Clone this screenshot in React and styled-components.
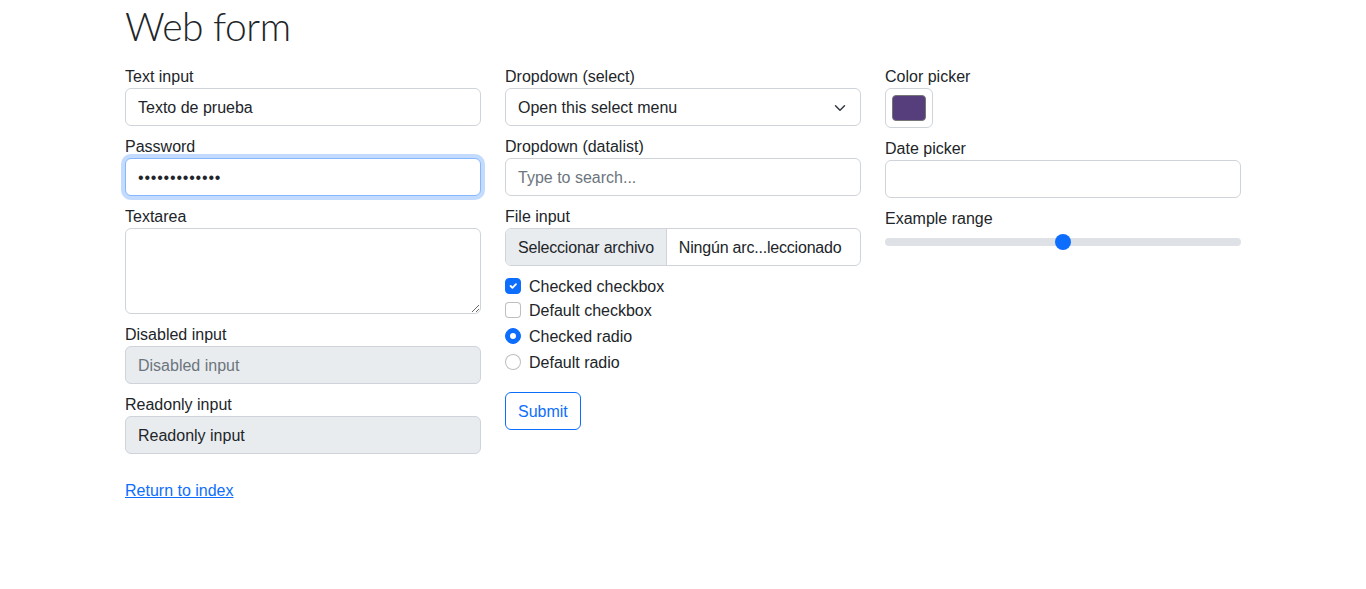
import React from "react";
import styled, { createGlobalStyle, css } from "styled-components";

const GlobalStyle = createGlobalStyle`
  * { box-sizing: border-box; }
  body {
    margin: 0;
    font-family: "Liberation Sans", Arial, sans-serif;
    font-size: 16px;
    line-height: 1.5;
    color: #212529;
    background: #fff;
  }
`;

const fieldBase = css`
  display: block;
  width: 100%;
  height: 38px;
  padding: 7px 12px 5px;
  font-family: inherit;
  font-size: 16px;
  line-height: 1.5;
  color: #212529;
  background-color: #fff;
  border: 1px solid #ced4da;
  border-radius: 6px;
  outline: none;
`;

function App() {
  return (
    <>
      <GlobalStyle />
      <Container>
        <Title>Web form</Title>
        <Row>
          <Column>
            <Field>
              <Caption>Text input</Caption>
              <Input type="text" defaultValue="Texto de prueba" />
            </Field>
            <Field>
              <Caption>Password</Caption>
              <Input type="password" defaultValue="1234567890123" focused secret />
            </Field>
            <Field>
              <Caption>Textarea</Caption>
              <TextArea rows={3} />
            </Field>
            <Field>
              <Caption>Disabled input</Caption>
              <Input type="text" placeholder="Disabled input" disabled />
            </Field>
            <Field>
              <Caption>Readonly input</Caption>
              <Input type="text" defaultValue="Readonly input" readOnly muted />
            </Field>
          </Column>

          <Column>
            <Field>
              <Caption>Dropdown (select)</Caption>
              <Select>
                <span>Open this select menu</span>
                <svg width="16" height="12" viewBox="0 0 16 16">
                  <path
                    d="m2 5 6 6 6-6"
                    fill="none"
                    stroke="#343a40"
                    strokeWidth="2"
                    strokeLinecap="round"
                    strokeLinejoin="round"
                  />
                </svg>
              </Select>
            </Field>
            <Field>
              <Caption>Dropdown (datalist)</Caption>
              <Input type="text" placeholder="Type to search..." />
            </Field>
            <Field>
              <Caption>File input</Caption>
              <FileBox>
                <FileButton>Seleccionar archivo</FileButton>
                <FileName>Ningún arc...leccionado</FileName>
              </FileBox>
            </Field>
            <Check>
              <CheckBox checked>
                <svg width="12" height="12" viewBox="0 0 20 20">
                  <path
                    d="m6 10 3 3 6-6"
                    fill="none"
                    stroke="#fff"
                    strokeWidth="3"
                    strokeLinecap="round"
                    strokeLinejoin="round"
                  />
                </svg>
              </CheckBox>
              <Caption>Checked checkbox</Caption>
            </Check>
            <Check>
              <CheckBox />
              <Caption>Default checkbox</Caption>
            </Check>
            <Check spaced>
              <Radio checked />
              <Caption>Checked radio</Caption>
            </Check>
            <Check spaced>
              <Radio />
              <Caption>Default radio</Caption>
            </Check>
            <SubmitButton type="button">Submit</SubmitButton>
          </Column>

          <Column>
            <Field>
              <Caption>Color picker</Caption>
              <ColorBox>
                <Swatch color="#563d7c" />
              </ColorBox>
            </Field>
            <Field>
              <Caption>Date picker</Caption>
              <Input type="text" />
            </Field>
            <Field>
              <Caption>Example range</Caption>
              <Range type="range" min="0" max="10" defaultValue="5" />
            </Field>
          </Column>
        </Row>
        <BackLink href="#">Return to index</BackLink>
      </Container>
    </>
  );
}

export default App;

const Container = styled.div`
  width: 1140px;
  margin: 0 auto;
  padding: 0 12px;
`;

const Title = styled.h1`
  height: 48px;
  margin: 0 0 16px;
  padding-top: 3px;
  font-family: "Lato", "Liberation Sans", sans-serif;
  font-size: 39px;
  font-weight: 300;
  letter-spacing: -0.5px;
  line-height: 1.2;
`;

const Row = styled.div`
  display: grid;
  grid-template-columns: repeat(3, 356px);
  column-gap: 24px;
  align-items: start;
`;

const Column = styled.div`
  display: flex;
  flex-direction: column;
  align-items: flex-start;
`;

const Field = styled.label`
  display: block;
  width: 100%;
  margin-bottom: 8px;
`;

const Caption = styled.span`
  display: block;
  height: 24px;
  padding-top: 1px;
`;

const Input = styled.input`
  ${fieldBase}
  &::placeholder {
    color: #6c757d;
    opacity: 1;
  }
  &:disabled {
    background-color: #e9ecef;
  }
  ${(p) =>
    p.muted &&
    css`
      background-color: #e9ecef;
    `}
  ${(p) =>
    p.secret &&
    css`
      letter-spacing: 0.8px;
    `}
  ${(p) =>
    p.focused &&
    css`
      border-color: #86b7fe;
      box-shadow: 0 0 0 4px rgba(13, 110, 253, 0.25);
    `}
`;

const TextArea = styled.textarea`
  ${fieldBase}
  height: 86px;
  resize: vertical;
`;

const Select = styled.div`
  ${fieldBase}
  display: flex;
  align-items: center;
  justify-content: space-between;
  padding-right: 12px;
`;

const FileBox = styled.div`
  ${fieldBase}
  display: flex;
  align-items: stretch;
  padding: 0;
  overflow: hidden;
`;

const FileButton = styled.span`
  display: flex;
  align-items: center;
  padding: 1px 12px 0;
  background-color: #e9ecef;
  border-right: 1px solid #ced4da;
  white-space: nowrap;
  letter-spacing: -0.2px;
`;

const FileName = styled.span`
  display: flex;
  align-items: center;
  padding: 1px 12px 0;
  white-space: nowrap;
  letter-spacing: -0.2px;
`;

const Check = styled.div`
  display: flex;
  align-items: center;
  gap: 8px;
  height: 24px;
  margin-top: ${(p) => (p.spaced ? "2px" : "0")};
`;

const CheckBox = styled.span`
  display: inline-flex;
  align-items: center;
  justify-content: center;
  flex-shrink: 0;
  width: 16px;
  height: 16px;
  border-radius: 4px;
  border: 1px solid ${(p) => (p.checked ? "#0d6efd" : "rgba(0, 0, 0, 0.25)")};
  background-color: ${(p) => (p.checked ? "#0d6efd" : "#fff")};
`;

const Radio = styled.span`
  display: inline-flex;
  align-items: center;
  justify-content: center;
  flex-shrink: 0;
  width: 16px;
  height: 16px;
  border-radius: 50%;
  border: 1px solid ${(p) => (p.checked ? "#0d6efd" : "rgba(0, 0, 0, 0.25)")};
  background-color: ${(p) => (p.checked ? "#0d6efd" : "#fff")};
  &::after {
    content: "";
    display: ${(p) => (p.checked ? "block" : "none")};
    width: 6px;
    height: 6px;
    border-radius: 50%;
    background: #fff;
  }
`;

const SubmitButton = styled.button`
  margin-top: 18px;
  height: 38px;
  padding: 7px 12px 5px;
  font-family: inherit;
  font-size: 16px;
  line-height: 1.5;
  color: #0d6efd;
  background: transparent;
  border: 1px solid #0d6efd;
  border-radius: 6px;
  cursor: pointer;
`;

const ColorBox = styled.div`
  width: 48px;
  height: 40px;
  padding: 6px;
  border: 1px solid #ced4da;
  border-radius: 6px;
  background: #fff;
`;

const Swatch = styled.div`
  width: 100%;
  height: 100%;
  border-radius: 4px;
  border: 1px solid #767676;
  background-color: ${(p) => p.color};
`;

const Range = styled.input`
  display: block;
  width: 100%;
  height: 24px;
  margin: 0;
  padding: 0;
  background: transparent;
  appearance: none;
  -webkit-appearance: none;
  &::-webkit-slider-runnable-track {
    height: 8px;
    border-radius: 16px;
    background-color: #dee2e6;
  }
  &::-webkit-slider-thumb {
    -webkit-appearance: none;
    width: 16px;
    height: 16px;
    margin-top: -4px;
    border: 0;
    border-radius: 50%;
    background-color: #0d6efd;
  }
`;

const BackLink = styled.a`
  display: inline-block;
  margin-top: 16px;
  padding-top: 1px;
  color: #0d6efd;
  text-decoration: underline;
`;
